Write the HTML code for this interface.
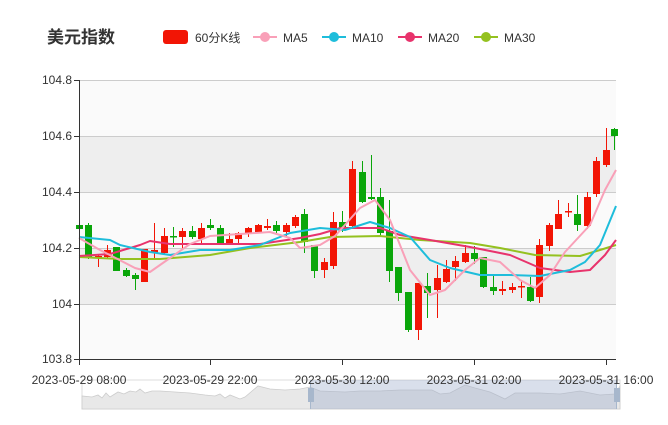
<!DOCTYPE html>
<html><head><meta charset="utf-8"><style>
body{margin:0;background:#fff;width:668px;height:420px;overflow:hidden;font-family:"Liberation Sans","Noto Sans CJK SC",sans-serif}
</style></head><body>
<svg id="s" width="668" height="420" xmlns="http://www.w3.org/2000/svg" font-family="Liberation Sans, Noto Sans CJK SC, sans-serif">
<text x="47" y="43" font-size="17" font-weight="bold" fill="#333">美元指数</text>
<rect x="163" y="30" width="25" height="14" rx="3" fill="#f21505"/>
<text x="195" y="42" font-size="12" fill="#333">60分K线</text>
<line x1="253" y1="37" x2="277" y2="37" stroke="#f9a0b8" stroke-width="2"/><circle cx="265" cy="37" r="5" fill="#f9a0b8"/>
<text x="283" y="42" font-size="12" fill="#333">MA5</text>
<line x1="322" y1="37" x2="346" y2="37" stroke="#1ebddb" stroke-width="2"/><circle cx="334" cy="37" r="5" fill="#1ebddb"/>
<text x="352" y="42" font-size="12" fill="#333">MA10</text>
<line x1="398" y1="37" x2="422" y2="37" stroke="#e8336c" stroke-width="2"/><circle cx="410" cy="37" r="5" fill="#e8336c"/>
<text x="428" y="42" font-size="12" fill="#333">MA20</text>
<line x1="474" y1="37" x2="498" y2="37" stroke="#94c11f" stroke-width="2"/><circle cx="486" cy="37" r="5" fill="#94c11f"/>
<text x="504" y="42" font-size="12" fill="#333">MA30</text>

<rect x="79" y="80" width="537" height="56" fill="#fafafa"/>
<rect x="79" y="136" width="537" height="56" fill="#eeeeee"/>
<rect x="79" y="192" width="537" height="56" fill="#fafafa"/>
<rect x="79" y="248" width="537" height="56" fill="#eeeeee"/>
<rect x="79" y="304" width="537" height="55" fill="#fafafa"/>
<g stroke="#ccc" stroke-width="1">
<line x1="79" y1="80.5" x2="616" y2="80.5"/><line x1="79" y1="136.5" x2="616" y2="136.5"/><line x1="79" y1="192.5" x2="616" y2="192.5"/><line x1="79" y1="248.5" x2="616" y2="248.5"/><line x1="79" y1="304.5" x2="616" y2="304.5"/></g>
<g id="c"></g>
<g fill="none" stroke-width="2" stroke-linejoin="round">
<polyline stroke="#94c11f" points="79,257 120,259 160,259 210,255 250,248 300,242 330,237 380,236 420,240 470,243 500,248 535,255 580,256 600,250 616,245"/>
<polyline stroke="#e8336c" points="79,256 110,254 140,245 150,241 170,244 260,244 300,238 320,234 340,228 380,228 400,235 430,240 470,247 510,255 540,268 570,272 590,270 605,255 616,240"/>
<polyline stroke="#1ebddb" points="79,237 110,240 120,245 150,252 170,255 200,250 230,250 260,245 290,233 320,228 345,230 370,222 390,228 410,237 430,260 450,268 480,275 510,275 540,276 570,270 585,262 600,245 616,206"/>
<polyline stroke="#f9a0b8" points="79,238 100,250 135,268 150,272 170,258 190,244 210,236 240,234 270,232 290,238 300,248 320,245 335,236 360,208 375,200 390,220 410,270 430,295 445,290 465,270 480,258 500,262 520,280 535,288 550,275 565,252 590,225 605,190 616,170"/>
</g>
<line x1="79.5" y1="80" x2="79.5" y2="359" stroke="#333"/>
<line x1="79" y1="359.5" x2="616" y2="359.5" stroke="#333"/>
<g stroke="#333"><line x1="74" y1="80.5" x2="79" y2="80.5"/><line x1="74" y1="136.5" x2="79" y2="136.5"/><line x1="74" y1="192.5" x2="79" y2="192.5"/><line x1="74" y1="248.5" x2="79" y2="248.5"/><line x1="74" y1="304.5" x2="79" y2="304.5"/><line x1="74" y1="359.5" x2="79" y2="359.5"/>
<line x1="79.5" y1="359" x2="79.5" y2="365"/><line x1="210.5" y1="359" x2="210.5" y2="365"/><line x1="342.5" y1="359" x2="342.5" y2="365"/><line x1="474.5" y1="359" x2="474.5" y2="365"/><line x1="606.5" y1="359" x2="606.5" y2="365"/></g>
<g font-size="12" fill="#333" text-anchor="end">
<text x="72" y="84">104.8</text><text x="72" y="140">104.6</text><text x="72" y="196">104.4</text><text x="72" y="252">104.2</text><text x="72" y="308">104</text><text x="72" y="363">103.8</text></g>
<rect x="82" y="380" width="538" height="29" fill="#fff" stroke="#ddd"/>
<polygon fill="#e8e8e8" stroke="#ccc" stroke-width="0.8" points="82,409 82,396 92,397 98,395 102,398 106,393 110,397 118,392 124,394 130,391 136,392 140,389 145,393 152,391 160,391 175,392 190,393 205,395 215,396 220,394 225,398 230,395 240,399 245,397 258,386 270,389 285,390 300,389 310,387 320,391 345,392 360,391 380,391 400,390 420,390 432,390 440,394 450,393 465,385 475,388 490,392 505,399 515,393 540,393 560,394 580,391 600,395 615,394 620,386 620,409"/>
<rect x="310" y="380" width="306" height="29" fill="rgba(160,175,205,0.4)"/>
<line x1="310.5" y1="380" x2="310.5" y2="409" stroke="#a7b7cc"/><line x1="616.5" y1="380" x2="616.5" y2="409" stroke="#a7b7cc"/>
<rect x="308" y="388" width="6" height="14" fill="#a7b7cc"/><rect x="614" y="388" width="6" height="14" fill="#a7b7cc"/>
<g font-size="12" fill="#333" text-anchor="middle">
<text x="79" y="384">2023-05-29 08:00</text><text x="210" y="384">2023-05-29 22:00</text><text x="342" y="384">2023-05-30 12:00</text><text x="474" y="384">2023-05-31 02:00</text><text x="606" y="384">2023-05-31 16:00</text></g>
</svg>
<script>
var d=[[79,225,229,217,233,0],[88,225,257,223,259,0],[98,256,257,255,267,1],[107,250,257,245,259,1],[116,247,271,247,271,0],[126,270,276,268,277,0],[135,275,279,273,290,0],[144,249,282,249,282,1],[154,250,253,223,259,1],[164,236,253,228,254,1],[173,236,237,227,247,0],[182,231,237,228,250,1],[192,231,237,226,239,0],[201,228,239,223,243,1],[210,225,228,219,230,0],[220,228,243,225,245,0],[229,239,243,233,245,1],[238,233,239,232,243,1],[248,228,234,227,237,1],[258,225,232,224,233,1],[267,226,228,219,230,1],[276,225,231,221,233,0],[286,225,232,223,237,1],[295,217,226,215,228,1],[304,214,242,209,253,0],[314,245,271,245,278,0],[324,262,270,258,278,1],[333,222,266,212,269,1],[342,222,229,211,232,0],[352,169,226,161,228,1],[362,172,202,161,203,0],[371,197,199,155,200,0],[380,197,233,188,237,0],[389,231,271,200,282,0],[398,267,293,267,301,0],[408,292,330,292,332,0],[418,283,330,283,340,1],[427,286,293,273,318,0],[437,278,290,265,318,1],[446,269,282,260,283,1],[455,261,267,256,281,1],[465,253,262,245,263,1],[474,253,259,246,264,0],[483,257,287,257,288,0],[493,287,291,276,295,0],[502,289,291,281,295,1],[512,287,290,283,293,1],[521,286,287,281,298,1],[530,287,301,277,302,0],[539,245,297,239,303,1],[549,225,246,223,251,1],[558,214,229,200,229,1],[568,211,212,203,217,1],[577,214,225,195,231,0],[587,197,226,192,229,1],[596,161,194,157,197,1],[606,150,165,128,167,1],[614,129,136,128,150,0]];
var g=document.getElementById('c'),h='';
d.forEach(function(c){var col=c[5]?'#f21505':'#0aa60a';
h+='<line x1="'+(c[0]+0.5)+'" y1="'+c[3]+'" x2="'+(c[0]+0.5)+'" y2="'+c[4]+'" stroke="'+col+'"/>';
h+='<rect x="'+(c[0]-3)+'" y="'+c[1]+'" width="7" height="'+Math.max(1.5,c[2]-c[1])+'" fill="'+col+'"/>';});
g.innerHTML=h;
</script>
</body></html>
